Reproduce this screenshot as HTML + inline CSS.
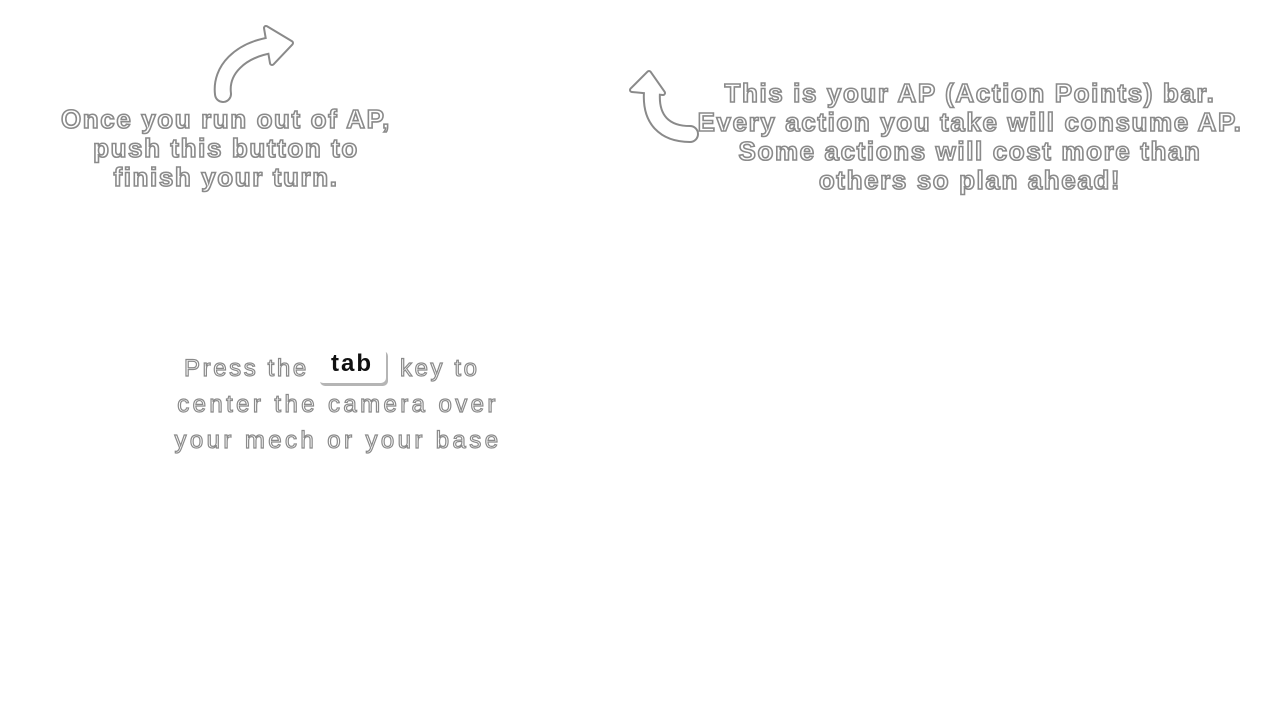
<!DOCTYPE html>
<html><head><meta charset="utf-8"><style>
html,body{margin:0;padding:0;background:#fff;width:1280px;height:720px;overflow:hidden;position:relative}
.t{position:absolute;font-family:"Liberation Sans",sans-serif;font-weight:bold;color:#fff;-webkit-text-stroke:1.6px #8a8a8a;text-align:center;white-space:nowrap}
.a{font-size:26px;line-height:29px;letter-spacing:1.6px}
.b{font-size:24px;line-height:36px;font-weight:normal;letter-spacing:3.4px;-webkit-text-stroke:1.2px #8a8a8a}
.key{position:absolute;left:318px;top:348px;width:68px;height:35px;background:#fff;border-radius:5px;box-shadow:2px 3px 0 #b5b5b5;font-family:"Liberation Sans",sans-serif;font-weight:bold;font-size:24px;color:#111;text-align:center;line-height:32px;letter-spacing:2px}
</style></head><body>
<svg width="1280" height="720" style="position:absolute;left:0;top:0">
<g stroke="#8a8a8a" fill="#8a8a8a" stroke-linecap="round" stroke-linejoin="round">
<path d="M223 94 C220 70 240 50 272 45" stroke-width="18" fill="none"/>
<path d="M266 28 L291 43 L272 63 Z" stroke-width="6"/>
<path d="M690 134 C665 134 650 120 652 92" stroke-width="18" fill="none"/>
<path d="M632 90 L649 73 L663 93 Z" stroke-width="6"/>
</g>
<g stroke="#fff" fill="#fff" stroke-linecap="round" stroke-linejoin="round">
<path d="M223 94 C220 70 240 50 272 45" stroke-width="14" fill="none"/>
<path d="M266 28 L291 43 L272 63 Z" stroke-width="2"/>
<path d="M690 134 C665 134 650 120 652 92" stroke-width="14" fill="none"/>
<path d="M632 90 L649 73 L663 93 Z" stroke-width="2"/>
</g>
</svg>
<div class="t a" style="left:26px;width:400px;top:105px">Once you run out of AP,<br>push this button to<br>finish your turn.</div>
<div class="t a" style="left:670px;width:600px;top:79px">This is your AP (Action Points) bar.<br>Every action you take will consume AP.<br>Some actions will cost more than<br>others so plan ahead!</div>
<div class="t b" style="left:184px;top:351px;text-align:left;letter-spacing:2.6px">Press the</div>
<div class="t b" style="left:400px;top:351px;text-align:left;letter-spacing:2.6px">key to</div>
<div class="t b" style="left:138px;width:400px;top:387px">center the camera over<br>your mech or your base</div>
<div class="key">tab</div>
</body></html>
